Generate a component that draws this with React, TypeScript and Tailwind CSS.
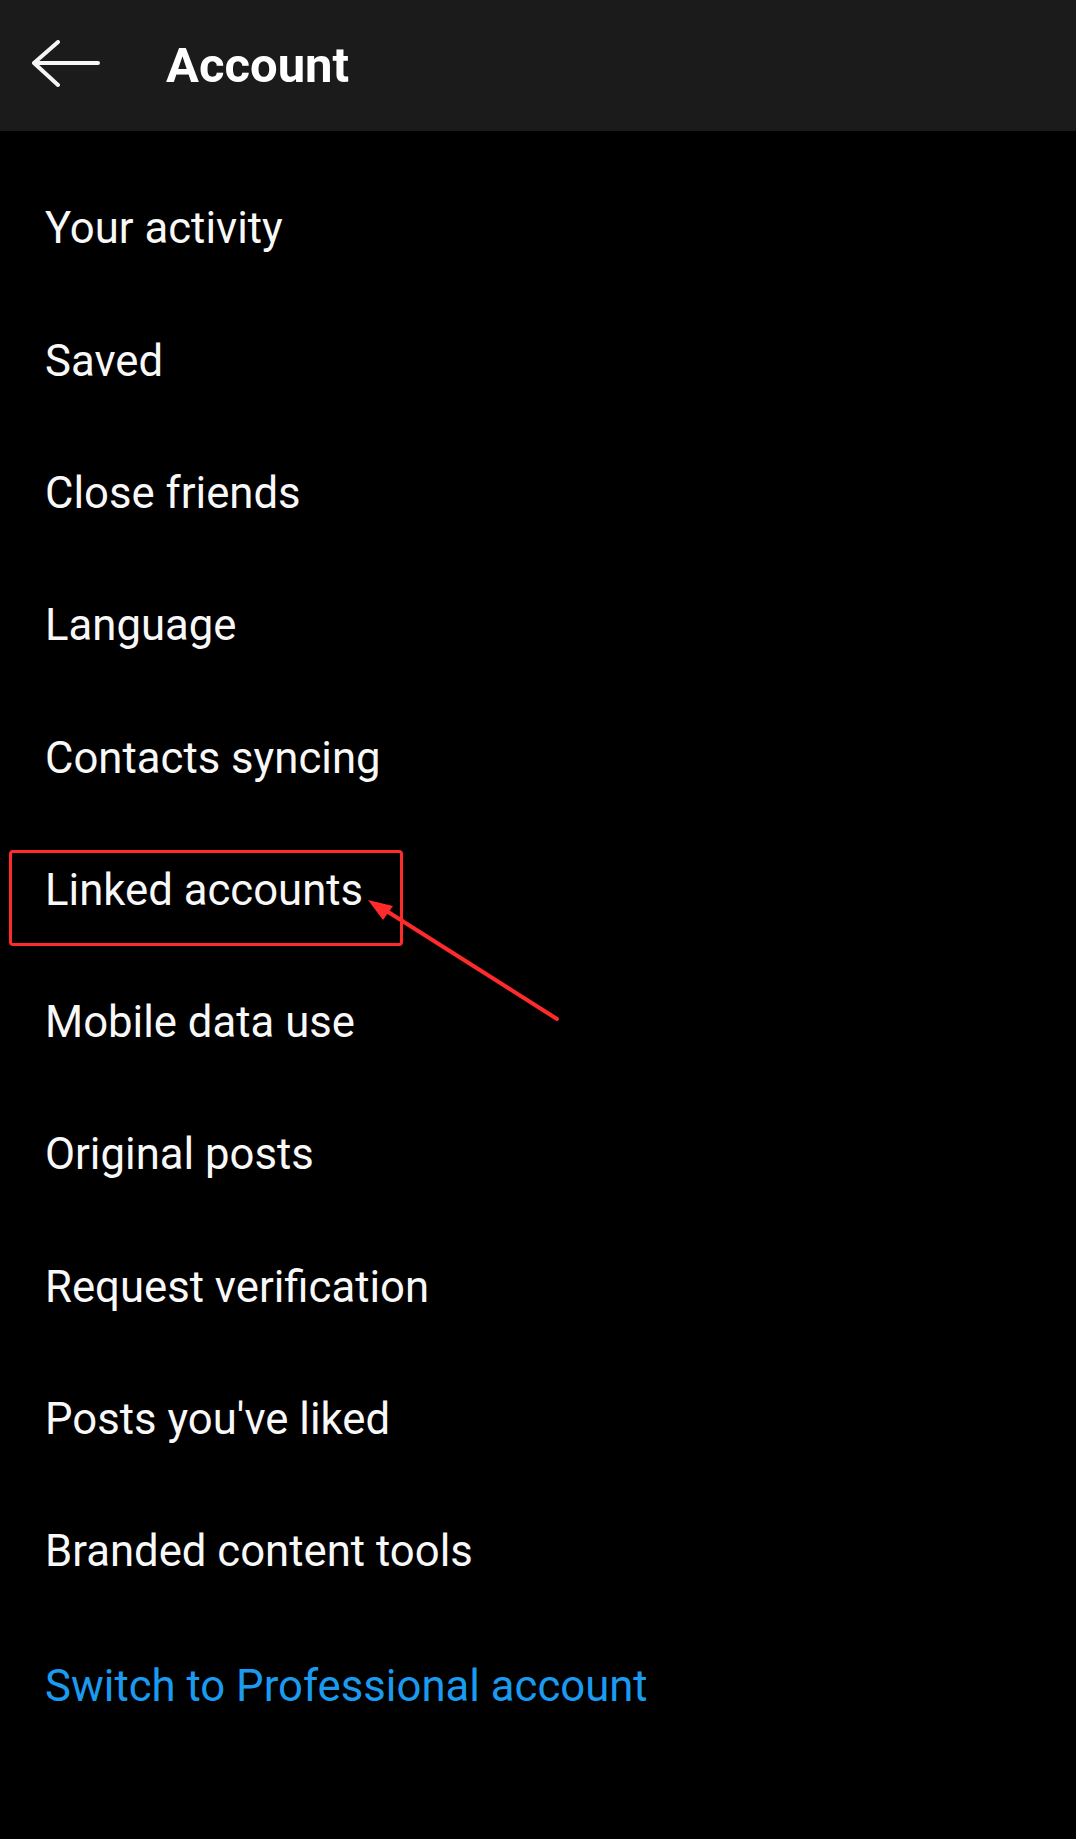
const items = [
  "Your activity",
  "Saved",
  "Close friends",
  "Language",
  "Contacts syncing",
  "Linked accounts",
  "Mobile data use",
  "Original posts",
  "Request verification",
  "Posts you've liked",
  "Branded content tools",
];

function BackArrow() {
  return (
    <svg width="70" height="52" viewBox="0 0 70 52" fill="none">
      <path
        d="M3 23H67M27 2L3 23L27 45"
        stroke="#f5f5f5"
        strokeWidth="4"
        strokeLinecap="round"
        strokeLinejoin="round"
      />
    </svg>
  );
}

export default function App() {
  return (
    <div className="relative min-h-[1839px] w-full bg-black font-['Roboto',sans-serif] text-white">
      <header className="flex h-[131px] items-center bg-[#1b1b1b]">
        <div className="ml-[31px] flex w-[135px] items-center">
          <BackArrow />
        </div>
        <h1 className="text-[49px] font-bold leading-none">Account</h1>
      </header>

      <ul className="pt-[32px]">
        {items.map((label) => (
          <li key={label} className="relative flex h-[132.3px] items-center pl-[45px] text-[43.7px]">
            <span className="text-[#f8f8f8]">{label}</span>
            {label === "Linked accounts" && (
              <div className="pointer-events-none absolute left-[9px] top-[26px] h-[96px] w-[394px] rounded-[4px] border-[3px] border-[#ff2b2b]" />
            )}
          </li>
        ))}
        <li className="mt-[3px] flex h-[132px] items-center pl-[45px] text-[43.7px] text-[#1a9bf0]">
          Switch to Professional account
        </li>
      </ul>

      <svg
        className="pointer-events-none absolute left-0 top-0"
        width="1076"
        height="1839"
        viewBox="0 0 1076 1839"
      >
        <line x1="557" y1="1019" x2="385" y2="910" stroke="#ff2b2b" strokeWidth="4" strokeLinecap="round" />
        <path d="M368 900L393 906L383 920Z" fill="#ff2b2b" />
      </svg>
    </div>
  );
}
